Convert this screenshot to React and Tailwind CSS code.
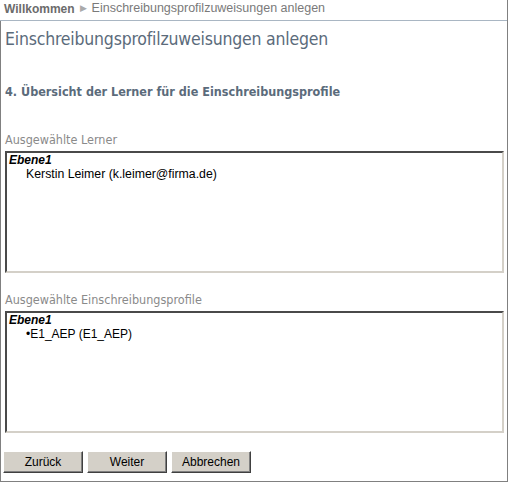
export default function App() {
  const buttons = ['Zurück', 'Weiter', 'Abbrechen']

  return (
    <div className="w-[508px] h-[482px] bg-white border-r border-b border-[#808080] font-['Liberation_Sans',Arial,sans-serif] text-[12px] flex flex-col">
      <div className="h-[21px] border-b border-[#a9b6c3] flex items-center pb-[3px] pl-[4px] leading-none">
        <span className="font-bold text-[#6b6b6b] text-[12px]">Willkommen</span>
        <span className="text-[#aaaaaa] text-[9px] mx-[5px]">&#9654;</span>
        <span className="text-[#7a7a7a] text-[12.5px]">Einschreibungsprofilzuweisungen anlegen</span>
      </div>
      <div className="flex-1 border-l border-[#808080] px-[4px] flex flex-col">
        <h1 className="text-[17.5px] leading-[18px] h-[18px] text-[#5b6b7b] font-['DejaVu_Sans_Condensed','Liberation_Sans',sans-serif] mt-[9px] tracking-[-0.2px]">
          Einschreibungsprofilzuweisungen anlegen
        </h1>
        <h2 className="font-bold text-[12.5px] leading-[13px] h-[13px] text-[#5b6b7b] font-['DejaVu_Sans_Condensed','Liberation_Sans',sans-serif] mt-[37px]">
          4. Übersicht der Lerner für die Einschreibungsprofile
        </h2>
        <div className="mt-[35px] text-[12.5px] leading-[13px] h-[13px] text-[#8a8a8a] font-['DejaVu_Sans_Condensed','Liberation_Sans',sans-serif]">
          Ausgewählte Lerner
        </div>
        <div className="mt-[5px] h-[122px] w-[499px] border-2 border-t-[#4a4a4a] border-l-[#4a4a4a] border-b-[#d4d0c8] border-r-[#d4d0c8] px-[2px] text-black leading-[14px]">
          <div className="font-bold italic">Ebene1</div>
          <div className="pl-[17px] text-[12.3px]">Kerstin Leimer (k.leimer@firma.de)</div>
        </div>
        <div className="mt-[20px] text-[12.5px] leading-[13px] h-[13px] text-[#8a8a8a] font-['DejaVu_Sans_Condensed','Liberation_Sans',sans-serif]">
          Ausgewählte Einschreibungsprofile
        </div>
        <div className="mt-[5px] h-[122px] w-[499px] border-2 border-t-[#4a4a4a] border-l-[#4a4a4a] border-b-[#d4d0c8] border-r-[#d4d0c8] px-[2px] text-black leading-[14px]">
          <div className="font-bold italic">Ebene1</div>
          <div className="pl-[17px]">&bull;E1_AEP (E1_AEP)</div>
        </div>
        <div className="mt-[18px] flex gap-[4px] -ml-[2px]">
          {buttons.map((b) => (
            <button
              key={b}
              className="w-[80px] h-[22px] bg-[#d4d0c8] border border-t-[#ffffff] border-l-[#ffffff] border-b-[#404040] border-r-[#404040] shadow-[inset_-1px_-1px_0_#808080] text-black text-[12px] leading-none"
            >
              {b}
            </button>
          ))}
        </div>
      </div>
    </div>
  )
}
